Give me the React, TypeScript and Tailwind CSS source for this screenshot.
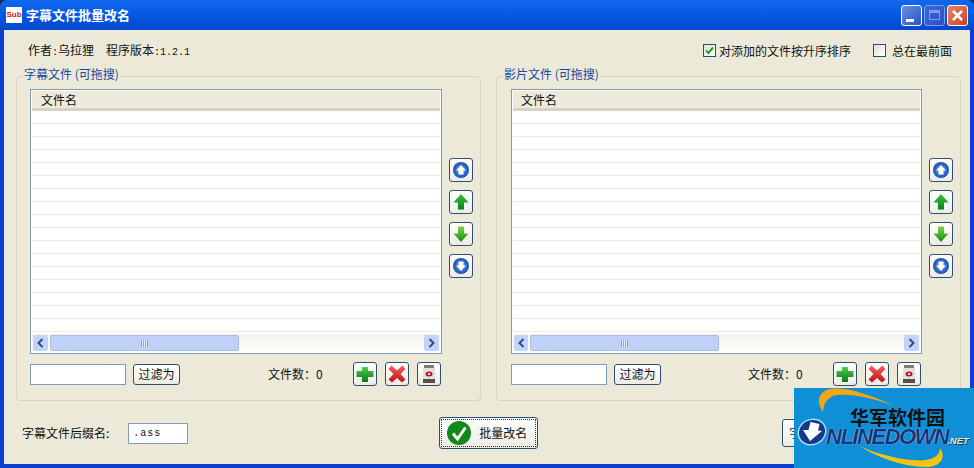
import type { ReactNode } from "react";

const rows = Array.from({ length: 17 });

const IconButton = ({ children }: { children: ReactNode }) => (
  <button className="w-6 h-6 shrink-0 flex items-center justify-center rounded-[3px] border border-[#2f4f72] bg-gradient-to-b from-white to-[#ecebe4]">
    {children}
  </button>
);

const CircleArrow = ({ down, id }: { down?: boolean; id: string }) => (
  <svg width="18" height="18" viewBox="0 0 18 18">
    <defs>
      <radialGradient id={id} cx="50%" cy="50%" r="55%">
        <stop offset="0%" stopColor="#6fa6f0" />
        <stop offset="100%" stopColor="#0a46a8" />
      </radialGradient>
    </defs>
    <circle cx="9" cy="9" r="8" fill={`url(#${id})`} />
    <path d={down ? "M6.500 4.500h5v4h2.500L9 14 4 8.500h2.500z" : "M6.500 13.500h5v-4h2.500L9 4 4 9.500h2.500z"} fill="#fff" />
  </svg>
);

const GreenArrow = ({ down, id }: { down?: boolean; id: string }) => (
  <svg width="18" height="18" viewBox="0 0 18 18">
    <defs>
      <linearGradient id={id} x1="0" y1="0" x2="0" y2="1">
        <stop offset="0%" stopColor={down ? "#7fd63c" : "#35c23a"} />
        <stop offset="100%" stopColor={down ? "#0f8a1c" : "#0f7d1e"} />
      </linearGradient>
    </defs>
    <path
      d={down ? "M6 1.500h6v7h4.500L9 17 1.500 8.500H6z" : "M9 1 16.500 9.500H12v7H6v-7H1.500z"}
      fill={`url(#${id})`}
    />
  </svg>
);

const PlusIcon = ({ id }: { id: string }) => (
  <svg width="20" height="20" viewBox="0 0 20 20">
    <defs>
      <linearGradient id={id} x1="0" y1="0" x2="0" y2="1">
        <stop offset="0%" stopColor="#4fd04a" />
        <stop offset="100%" stopColor="#0b7a1a" />
      </linearGradient>
    </defs>
    <path d="M7 3h6v4h5.500v6H13v5H7v-5H1.500V7H7z" fill={`url(#${id})`} />
  </svg>
);

const CrossIcon = ({ id }: { id: string }) => (
  <svg width="20" height="20" viewBox="0 0 20 20">
    <defs>
      <linearGradient id={id} x1="0" y1="0" x2="0" y2="1">
        <stop offset="0%" stopColor="#f4605c" />
        <stop offset="100%" stopColor="#c2101a" />
      </linearGradient>
    </defs>
    <path d="M4.500 1.500 10 6.500l5.500-5L18.500 5 13.500 10l5 5.500-3.500 3L10 14l-5 4.500-3.500-3 5-5.500-5-5z" fill={`url(#${id})`} />
  </svg>
);

const TrashIcon = () => (
  <svg width="16" height="20" viewBox="0 0 16 20">
    <rect x="3" y="1" width="10" height="3" fill="#7d7d78" />
    <rect x="2" y="4" width="12" height="13" fill="#e4dfda" />
    <rect x="2" y="15" width="12" height="4" fill="#55524e" />
    <ellipse cx="8" cy="10" rx="3.500" ry="2.500" fill="#a8122c" />
    <ellipse cx="8" cy="10" rx="1.500" ry="1" fill="#f1d6d8" />
  </svg>
);

const FileList = ({ right }: { right?: boolean }) => (
  <div className={`h-[265px] shrink-0 border border-[#7f9db9] bg-white flex flex-col p-px ${right ? "w-[411px]" : "w-[412px]"}`}>
    <div className={`h-[20px] shrink-0 pt-px flex items-center bg-[#ebeadb] border-b-[3px] border-[#d6d3c4] text-[#111] ${right ? "pl-[8px]" : "pl-[9px]"}`}>
      文件名
    </div>
    <div className="flex-1 overflow-hidden">
      {rows.map((_, i) => (
        <div key={i} className="h-[13px] border-b border-[#edebe0]" />
      ))}
    </div>
    <div className="h-[18px] shrink-0 flex bg-gradient-to-b from-[#f3f3ee] to-[#fdfdfb]">
      <div className={`m-px rounded-[2px] bg-[#c4d4f8] text-[#2c4a86] flex items-center justify-center ${right ? "w-[14px]" : "w-[15px]"}`}>
        <svg width="9" height="10" viewBox="0 0 9 10">
          <path d="M6.500 1 2.500 5l4 4" fill="none" stroke="currentColor" strokeWidth="2" />
        </svg>
      </div>
      <div className="w-[189px] m-px rounded-[2px] bg-[#bfd1f8] border border-[#a9bde8] flex items-center justify-center">
        <div className="w-[7px] h-[7px] bg-[repeating-linear-gradient(90deg,#8ea4d6_0,#8ea4d6_1px,#e6edfc_1px,#e6edfc_2px)]" />
      </div>
      <div className="flex-1" />
      <div className="w-[15px] m-px rounded-[2px] bg-[#c4d4f8] text-[#2c4a86] flex items-center justify-center">
        <svg width="9" height="10" viewBox="0 0 9 10">
          <path d="M2.500 1l4 4-4 4" fill="none" stroke="currentColor" strokeWidth="2" />
        </svg>
      </div>
    </div>
  </div>
);

const Group = ({ title, id, right }: { title: string; id: string; right?: boolean }) => (
  <div className={`relative w-[465px] h-[325px] rounded-[4px] border border-[#d8d4c4] pt-[12px] ${right ? "pl-[14px]" : "pl-[13px]"}`}>
    <span className="absolute left-[6px] top-[-11px] px-px bg-[#ece9d8] text-[#1a47a0] leading-[16px]">{title}</span>
    <div className="flex">
      <FileList right={right} />
      <div className="ml-[7px] flex flex-col gap-2 pt-[69px]">
        <IconButton><CircleArrow id={`${id}-a`} /></IconButton>
        <IconButton><GreenArrow id={`${id}-b`} /></IconButton>
        <IconButton><GreenArrow down id={`${id}-c`} /></IconButton>
        <IconButton><CircleArrow down id={`${id}-d`} /></IconButton>
      </div>
    </div>
    <div className={`flex items-center mt-[8px] h-6 ${right ? "w-[410px]" : "w-[411px]"}`}>
      <div className="w-[96px] h-[21px] mt-px border border-[#7f9db9] bg-white" />
      <button className="ml-[7px] w-[47px] h-[21px] rounded-[3px] border border-[#2f4f72] bg-gradient-to-b from-white to-[#ecebe4] text-[#111]">
        过滤为
      </button>
      <span className={`text-[#111] whitespace-nowrap ${right ? "ml-[87px]" : "ml-[88px]"}`}>文件数：0</span>
      <div className="ml-auto flex gap-2">
        <IconButton><PlusIcon id={`${id}-e`} /></IconButton>
        <IconButton><CrossIcon id={`${id}-f`} /></IconButton>
        <IconButton><TrashIcon /></IconButton>
      </div>
    </div>
  </div>
);

const Watermark = () => (
  <div className="absolute right-0 bottom-0 w-[180px] h-[80px] bg-[#0f8fd6] overflow-hidden">
    <svg className="absolute inset-0" width="180" height="80" viewBox="0 0 180 80">
      <path d="M29 24C22 14 24 4 36 1C52-1 72 5 100 18C76 9 58 6 44 7C34 8 30 14 29 24Z" fill="#f3a512" />
      <path d="M62 56C84 68 118 74 132 72C142 70 146 66 146 60C152 68 148 78 134 79C112 80 84 70 62 56Z" fill="#f4c30f" />
      <ellipse cx="18" cy="44" rx="14" ry="12.500" transform="rotate(-25 18 44)" fill="#123a8c" stroke="#a8d8f4" strokeWidth="1.500" />
      <path d="M16.500 34 25.500 36 24 42.500 28 43 16 53 9 42 14.500 42Z" fill="#fff" />
    </svg>
    <div className="relative pl-[56px] pt-[18px] text-[19px] leading-[22px] font-bold text-[#111]">华军软件园</div>
    <div className="absolute left-[32px] top-[41px] flex items-baseline whitespace-nowrap italic font-bold font-['Liberation_Sans',sans-serif]">
      <span className="text-[#10357f] text-[22px] leading-[16px] tracking-[-1.500px] [text-shadow:0_0_1px_#fff]">NLINEDOWN</span>
      <span className="-ml-[1px] text-[9.500px] leading-[10px] text-[#dbe8ee] [text-shadow:1px_1px_0_#333]">.NET</span>
    </div>
  </div>
);

export default function App() {
  return (
    <div className="relative w-[974px] h-[468px] overflow-hidden bg-[#1c2c50] text-[12px] font-['Noto_Sans_CJK_SC','Liberation_Sans',sans-serif]">
      <div className="w-full h-full flex flex-col rounded-t-[7px] overflow-hidden bg-[#0a3fd0]">
        {/* Title bar */}
        <div className="h-[30px] shrink-0 flex items-center pl-[6px] pr-[6px] bg-gradient-to-b from-[#1068ee] via-[#0558e0] to-[#0448cc]">
          <div className="w-4 h-4 bg-white flex items-center justify-center text-[8px] leading-none font-bold text-[#c81818] font-['Liberation_Sans',sans-serif]">Sub</div>
          <span className="ml-[4px] text-[13px] font-bold text-white">字幕文件批量改名</span>
          <div className="ml-auto flex gap-[2px]">
            <div className="w-[21px] h-[21px] rounded-[3px] border border-white bg-gradient-to-br from-[#6d8fe8] to-[#2a4fc8] flex items-end pl-[4px] pb-[3px]">
              <div className="w-[8px] h-[3px] bg-white" />
            </div>
            <div className="w-[21px] h-[21px] rounded-[3px] border border-[#7f9ce8] bg-gradient-to-br from-[#3c66d8] to-[#2a52c8] flex items-center justify-center">
              <div className="w-[11px] h-[10px] border border-[#7f9ce8] border-t-[3px]" />
            </div>
            <div className="w-[21px] h-[21px] rounded-[3px] border border-white bg-gradient-to-br from-[#e8866a] to-[#c8401c] flex items-center justify-center">
              <svg width="13" height="13" viewBox="0 0 13 13">
                <path d="M2 2l9 9M11 2l-9 9" stroke="#fff" strokeWidth="2.500" />
              </svg>
            </div>
          </div>
        </div>

        {/* Client area */}
        <div className="flex-1 mx-[4px] mb-[4px] bg-[#ece9d8] flex flex-col text-[#111]">
          <div className="h-[40px] shrink-0 flex items-center pl-[24px] pr-[18px] pt-[1px]">
            <span>作者<span className="font-['Liberation_Mono',monospace] text-[10px]">:</span>乌拉狸</span>
            <span className="ml-[12px]">程序版本<span className="font-['Liberation_Mono',monospace] text-[10px]">:1.2.1</span></span>
            <div className="ml-auto w-[13px] h-[13px] border border-[#1c5180] bg-gradient-to-br from-[#e0e0d8] to-white flex items-center justify-center">
              <svg width="9" height="9" viewBox="0 0 9 9">
                <path d="M1 4.500 3.500 7 8 1.500" fill="none" stroke="#21a121" strokeWidth="2" />
              </svg>
            </div>
            <span className="ml-[3px]">对添加的文件按升序排序</span>
            <div className="ml-[22px] w-[13px] h-[13px] border border-[#1c5180] bg-gradient-to-br from-[#e0e0d8] to-white" />
            <span className="ml-[6px]">总在最前面</span>
          </div>

          <div className="flex gap-[15px] pl-[12px] pt-[6px]">
            <Group title="字幕文件 (可拖搜)" id="sub" />
            <Group right title="影片文件 (可拖搜)" id="mov" />
          </div>

          <div className="flex-1 flex items-center pl-[18px] pr-[8px]">
            <span>字幕文件后缀名:</span>
            <div className="ml-[19px] mt-[2px] w-[60px] h-[21px] border border-[#7f9db9] bg-white pl-[4px] flex items-center font-['Liberation_Mono',monospace] text-[10px] tracking-[1px]">.ass</div>
            <button className="ml-[251px] w-[99px] h-[32px] rounded-[3px] border border-[#1c5180] outline-1 outline-dotted -outline-offset-[3px] outline-[#333] bg-gradient-to-b from-white to-[#ecebe4] flex items-center pl-[6px] text-[#111]">
              <svg width="26" height="26" viewBox="0 0 26 26">
                <circle cx="13" cy="13" r="12" fill="#12881c" />
                <path d="M7 13.500 11.500 19 19.500 7.500" fill="none" stroke="#f4f4ea" strokeWidth="3" />
              </svg>
              <span className="ml-[7px]">批量改名</span>
            </button>
            <button className="ml-[244px] w-[70px] h-[28px] rounded-[3px] border border-[#2f4f72] bg-gradient-to-b from-white to-[#ecebe4] text-left pl-[6px]">字幕</button>
          </div>
        </div>
      </div>
      <Watermark />
    </div>
  );
}
